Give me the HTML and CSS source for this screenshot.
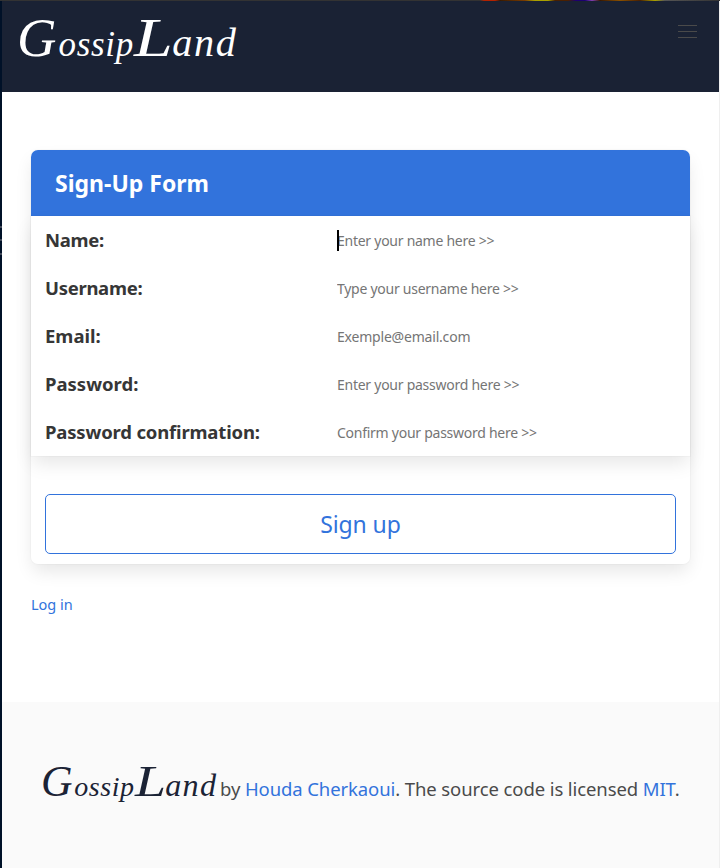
FILE: index.html
```html
<!DOCTYPE html>
<html lang="en">
<head>
<meta charset="utf-8">
<title>GossipLand</title>
<link rel="stylesheet" href="styles.css">
</head>
<body>
<div class="top-edge"></div>
<div class="page">
  <nav class="navbar">
    <a class="brand"><span class="cap">G</span><span class="ossip">ossip</span><span class="cap cap-l">L</span><span class="and">and</span></a>
    <div class="burger"><span></span><span></span><span></span></div>
  </nav>
  <main class="main">
    <form class="card">
      <header class="card-header">Sign-Up Form</header>
      <div class="fields">
        <div class="row"><label class="tight">Name:</label><div class="control"><i class="caret"></i><input placeholder="Enter your name here &gt;&gt;"></div></div>
        <div class="row"><label class="tight">Username:</label><div class="control"><input placeholder="Type your username here &gt;&gt;"></div></div>
        <div class="row"><label>Email:</label><div class="control"><input class="email" placeholder="Exemple@email.com"></div></div>
        <div class="row"><label>Password:</label><div class="control"><input placeholder="Enter your password here &gt;&gt;"></div></div>
        <div class="row"><label class="long">Password confirmation:</label><div class="control"><input placeholder="Confirm your password here &gt;&gt;"></div></div>
      </div>
      <div class="actions"><button type="button" class="submit">Sign up</button></div>
    </form>
    <a class="login">Log in</a>
  </main>
  <footer class="footer">
    <span class="brand small"><span class="cap">G</span><span class="ossip">ossip</span><span class="cap cap-l">L</span><span class="and">and</span></span>
    <p class="credit">by <a class="author">Houda Cherkaoui</a>. The source code is licensed <a>MIT</a>.</p>
  </footer>
</div>
</body>
</html>
```
FILE: styles.css
```css
* { box-sizing: border-box; }
body {
  margin: 0;
  background: linear-gradient(#001128 0 226px, #40495a 226px 228px, #001128 228px 239px, #40495a 239px 241px, #001128 241px 253px, #40495a 253px 255px, #001128 255px);
  color: #4a4a4a;
  font-family: "Noto Sans", sans-serif;
  height: 868px;
  overflow: hidden;
}
a { color: #3273dc; text-decoration: none; }
.top-edge {
  height: 1px;
  background: linear-gradient(90deg, #333 0 480px, #b22200 484px 495px, #3a1a00 500px, #7a3c00 525px, #aaa000 535px 548px, #4a2000 555px 568px, #1c0070 576px 585px, #8040b0 592px, #3a1800 600px, #8a5000 620px, #4a2000 640px, #aaa000 655px, #555 665px, #333 720px);
}
.page {
  margin-left: 2px;
  height: 867px;
  background: #fff;
  border-right: 1px solid #efefef;
  display: flex;
  flex-direction: column;
}
.navbar {
  height: 91px;
  background: #1a2234;
  display: flex;
  justify-content: space-between;
  align-items: flex-start;
  padding: 0 22px 0 15px;
}
.brand {
  display: flex;
  align-items: baseline;
  font: italic 35px/1 "Liberation Serif", cursive;
  color: #fff;
  margin-top: 19px;
  height: 1em;
}
.cap { font-size: 1.56em; line-height: .67; width: .76em; }
.cap-l { width: .7em; transform: scaleX(1.28); transform-origin: 0 50%; }
.ossip { letter-spacing: .02em; width: 2.16em; }
.and { font-size: 1.15em; letter-spacing: .04em; }
.burger { display: flex; flex-direction: column; gap: 5px; padding-top: 24px; }
.burger span { width: 19px; height: 1px; background: #4a4a4a; }
.main { height: 610px; padding: 58px 29px 0 29px; }
.card {
  height: 414px;
  border-radius: 7px;
  box-shadow: 0 9px 18px -2px rgba(10, 10, 10, .1), 0 0 0 1px rgba(10, 10, 10, .02);
}
.card-header {
  height: 66px;
  padding-left: 24px;
  border-radius: 7px 7px 0 0;
  background: #3273dc;
  color: #fff;
  font-weight: 700;
  font-size: 23px;
  line-height: 67px;
}
.fields {
  background: #fff;
  box-shadow: 0 9px 18px -2px rgba(10, 10, 10, .1), 0 0 0 1px rgba(10, 10, 10, .02);
}
.row {
  height: 48px;
  display: grid;
  grid-template-columns: 292px 1fr;
  padding: 0 14px;
  align-items: center;
}
label { color: #363636; font-weight: 700; font-size: 18.5px; line-height: 48px; }
.tight { letter-spacing: -.3px; }
.long { letter-spacing: -.17px; }
.control { position: relative; height: 48px; }
input {
  display: block;
  width: 100%;
  height: 48px;
  padding: 0;
  border: 0;
  outline: 0;
  background: none;
  font: 14px "Noto Sans", sans-serif;
  letter-spacing: -.26px;
}
.email { letter-spacing: -.2px; }
input::placeholder { color: #757575; }
.caret { position: absolute; left: 0; top: 14px; width: 2px; height: 21px; background: #000; }
.actions { padding: 38px 14px 0; }
.submit {
  display: block;
  width: 100%;
  height: 60px;
  padding: 0 0 1px;
  border: 1px solid #3273dc;
  border-radius: 5px;
  background: #fff;
  color: #3273dc;
  font: 23px "Noto Sans", sans-serif;
  letter-spacing: -.1px;
}
.login { display: inline-block; margin-top: 29px; font-size: 14.5px; line-height: 22px; }
.footer {
  flex: 1;
  background: #fafafa;
  display: flex;
  align-items: baseline;
  padding: 65px 0 0 39px;
}
.small { font-size: 28px; color: #1b2335; width: 179px; margin-top: 0; }
.credit { margin: 0; font-size: 18.5px; line-height: 28px; letter-spacing: -.1px; white-space: nowrap; }
```
